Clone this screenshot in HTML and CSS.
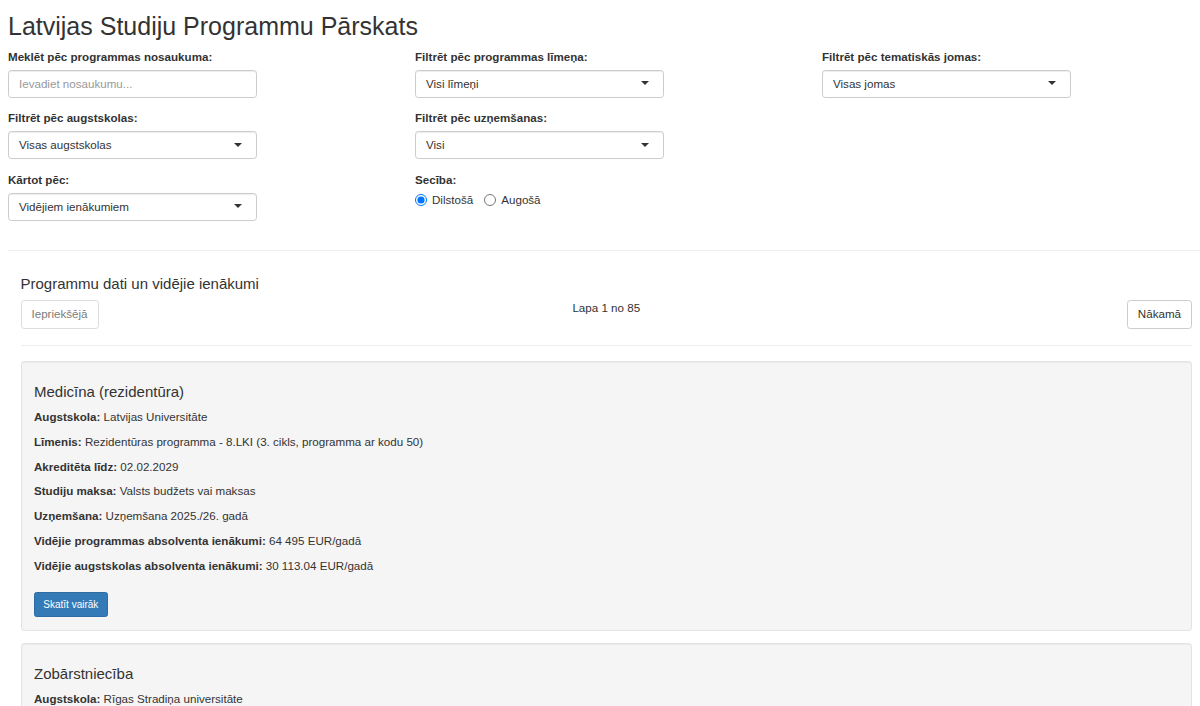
FILE: index.html
```html
<!DOCTYPE html>
<html lang="lv">
<head>
  <meta charset="UTF-8" />
  <meta name="viewport" content="width=device-width, initial-scale=1.0"/>
  <title>Latvijas Studiju Programmu Pārskats</title>
  <link rel="stylesheet" href="styles.css">
</head>
<body>
  <div class="page">
    <h2 class="page-title">Latvijas Studiju Programmu Pārskats</h2>

    <!-- Filtri -->
    <div class="filters">
      <div class="filter-col">
        <div class="form-group">
          <label class="control-label">Meklēt pēc programmas nosaukuma:</label>
          <input class="form-control" type="text" placeholder="Ievadiet nosaukumu...">
        </div>
        <div class="form-group">
          <label class="control-label">Filtrēt pēc augstskolas:</label>
          <div class="select-box">Visas augstskolas</div>
        </div>
        <div class="form-group">
          <label class="control-label">Kārtot pēc:</label>
          <div class="select-box">Vidējiem ienākumiem</div>
        </div>
      </div>

      <div class="filter-col">
        <div class="form-group">
          <label class="control-label">Filtrēt pēc programmas līmeņa:</label>
          <div class="select-box">Visi līmeņi</div>
        </div>
        <div class="form-group">
          <label class="control-label">Filtrēt pēc uzņemšanas:</label>
          <div class="select-box">Visi</div>
        </div>
        <div class="form-group">
          <label class="control-label">Secība:</label>
          <div class="radio-group">
            <label class="radio-inline"><input type="radio" name="order" checked><span>Dilstošā</span></label>
            <label class="radio-inline"><input type="radio" name="order"><span>Augošā</span></label>
          </div>
        </div>
      </div>

      <div class="filter-col">
        <div class="form-group">
          <label class="control-label">Filtrēt pēc tematiskās jomas:</label>
          <div class="select-box">Visas jomas</div>
        </div>
      </div>
    </div>

    <hr class="divider">

    <!-- Rezultāti -->
    <div class="results">
      <h4 class="section-title">Programmu dati un vidējie ienākumi</h4>
      <div class="pager">
        <div><button class="btn" disabled>Iepriekšējā</button></div>
        <span class="page-info">Lapa 1 no 85</span>
        <div class="pager-right"><button class="btn">Nākamā</button></div>
      </div>

      <hr class="divider divider-list">

      <div class="well">
        <h4 class="program-name">Medicīna (rezidentūra)</h4>
        <p><strong>Augstskola:</strong> Latvijas Universitāte</p>
        <p><strong>Līmenis:</strong> Rezidentūras programma - 8.LKI (3. cikls, programma ar kodu 50)</p>
        <p><strong>Akreditēta līdz:</strong> 02.02.2029</p>
        <p><strong>Studiju maksa:</strong> Valsts budžets vai maksas</p>
        <p><strong>Uzņemšana:</strong> Uzņemšana 2025./26. gadā</p>
        <p><strong>Vidējie programmas absolventa ienākumi:</strong> 64 495 EUR/gadā</p>
        <p><strong>Vidējie augstskolas absolventa ienākumi:</strong> 30 113.04 EUR/gadā</p>
        <button class="btn btn-primary btn-sm">Skatīt vairāk</button>
      </div>

      <div class="well">
        <h4 class="program-name">Zobārstniecība</h4>
        <p><strong>Augstskola:</strong> Rīgas Stradiņa universitāte</p>
        <p><strong>Līmenis:</strong> Profesionālā maģistra programma - 7.LKI (2. cikls)</p>
        <p><strong>Akreditēta līdz:</strong> 15.06.2030</p>
        <p><strong>Studiju maksa:</strong> Valsts budžets vai maksas</p>
        <p><strong>Uzņemšana:</strong> Uzņemšana 2025./26. gadā</p>
        <p><strong>Vidējie programmas absolventa ienākumi:</strong> 52 180 EUR/gadā</p>
        <p><strong>Vidējie augstskolas absolventa ienākumi:</strong> 34 702.51 EUR/gadā</p>
        <button class="btn btn-primary btn-sm">Skatīt vairāk</button>
      </div>
    </div>
  </div>
</body>
</html>
```

FILE: styles.css
```css
* {
  box-sizing: border-box;
}

body {
  margin: 0;
  font-family: "Liberation Sans", Arial, sans-serif;
  font-size: 11.6px;
  line-height: 16.6px;
  color: #333;
  background-color: #fff;
}

.page {
  padding-left: 8px;
}

.page-title {
  font-size: 25px;
  font-weight: 500;
  line-height: 27.5px;
  margin: 13px 0 8.3px;
}

/* filters */
.filters {
  display: grid;
  grid-template-columns: repeat(3, 407px);
}

.form-group {
  margin-bottom: 12.5px;
}

.control-label {
  display: block;
  font-weight: bold;
  margin-bottom: 4.2px;
}

.form-control,
.select-box {
  display: block;
  width: 249px;
  height: 28.2px;
  padding: 5px 10px;
  font-family: inherit;
  font-size: 11.6px;
  line-height: 16.6px;
  color: #333;
  background-color: #fff;
  border: 1px solid #ccc;
  border-radius: 3.3px;
  box-shadow: inset 0 1px 1px rgba(0, 0, 0, 0.075);
}

.form-control::placeholder {
  color: #999;
}

.select-box {
  position: relative;
}

.select-box::after {
  content: "";
  position: absolute;
  right: 14px;
  top: 50%;
  margin-top: -2.5px;
  border-style: solid;
  border-width: 4.2px 4.2px 0 4.2px;
  border-color: #333 transparent transparent transparent;
}

.radio-group {
  display: flex;
  gap: 11px;
  margin-top: -1px;
}

.radio-inline {
  display: flex;
  align-items: center;
  gap: 5px;
  cursor: pointer;
}

.radio-inline input {
  width: 12px;
  height: 12px;
  margin: 0;
}

.divider {
  border: 0;
  border-top: 1px solid #eee;
  margin: 16.6px 0;
}

.divider-list {
  margin: 16px 0 15px;
}

/* results */
.results {
  margin: 0 8px 0 12.5px;
  padding-top: 8.3px;
}

.section-title,
.program-name {
  font-size: 15px;
  font-weight: 500;
  line-height: 16.5px;
  margin: 8.3px 0;
}

.section-title {
  margin-top: 0;
}

.pager {
  display: grid;
  grid-template-columns: 1fr auto 1fr;
  align-items: start;
}

.pager-right {
  text-align: right;
}

.btn {
  display: inline-block;
  height: 28.2px;
  padding: 5px 10px;
  font-family: inherit;
  font-size: 11.6px;
  line-height: 16.6px;
  color: #333;
  background-color: #fff;
  border: 1px solid #ccc;
  border-radius: 3.3px;
  cursor: pointer;
}

.btn[disabled] {
  opacity: 0.65;
  cursor: not-allowed;
}

.btn-primary {
  color: #fff;
  background-color: #337ab7;
  border-color: #2e6da4;
}

.btn-sm {
  height: 25px;
  padding: 4px 8.3px;
  font-size: 10px;
  line-height: 15px;
  border-radius: 2.5px;
  margin-top: 9px;
}

.well {
  padding: 14px 12.5px 12.5px;
  margin-bottom: 12px;
  background-color: #f5f5f5;
  border: 1px solid #e3e3e3;
  border-radius: 3.3px;
  box-shadow: inset 0 1px 1px rgba(0, 0, 0, 0.05);
}

.well p {
  margin: 0 0 8.3px;
}
```
